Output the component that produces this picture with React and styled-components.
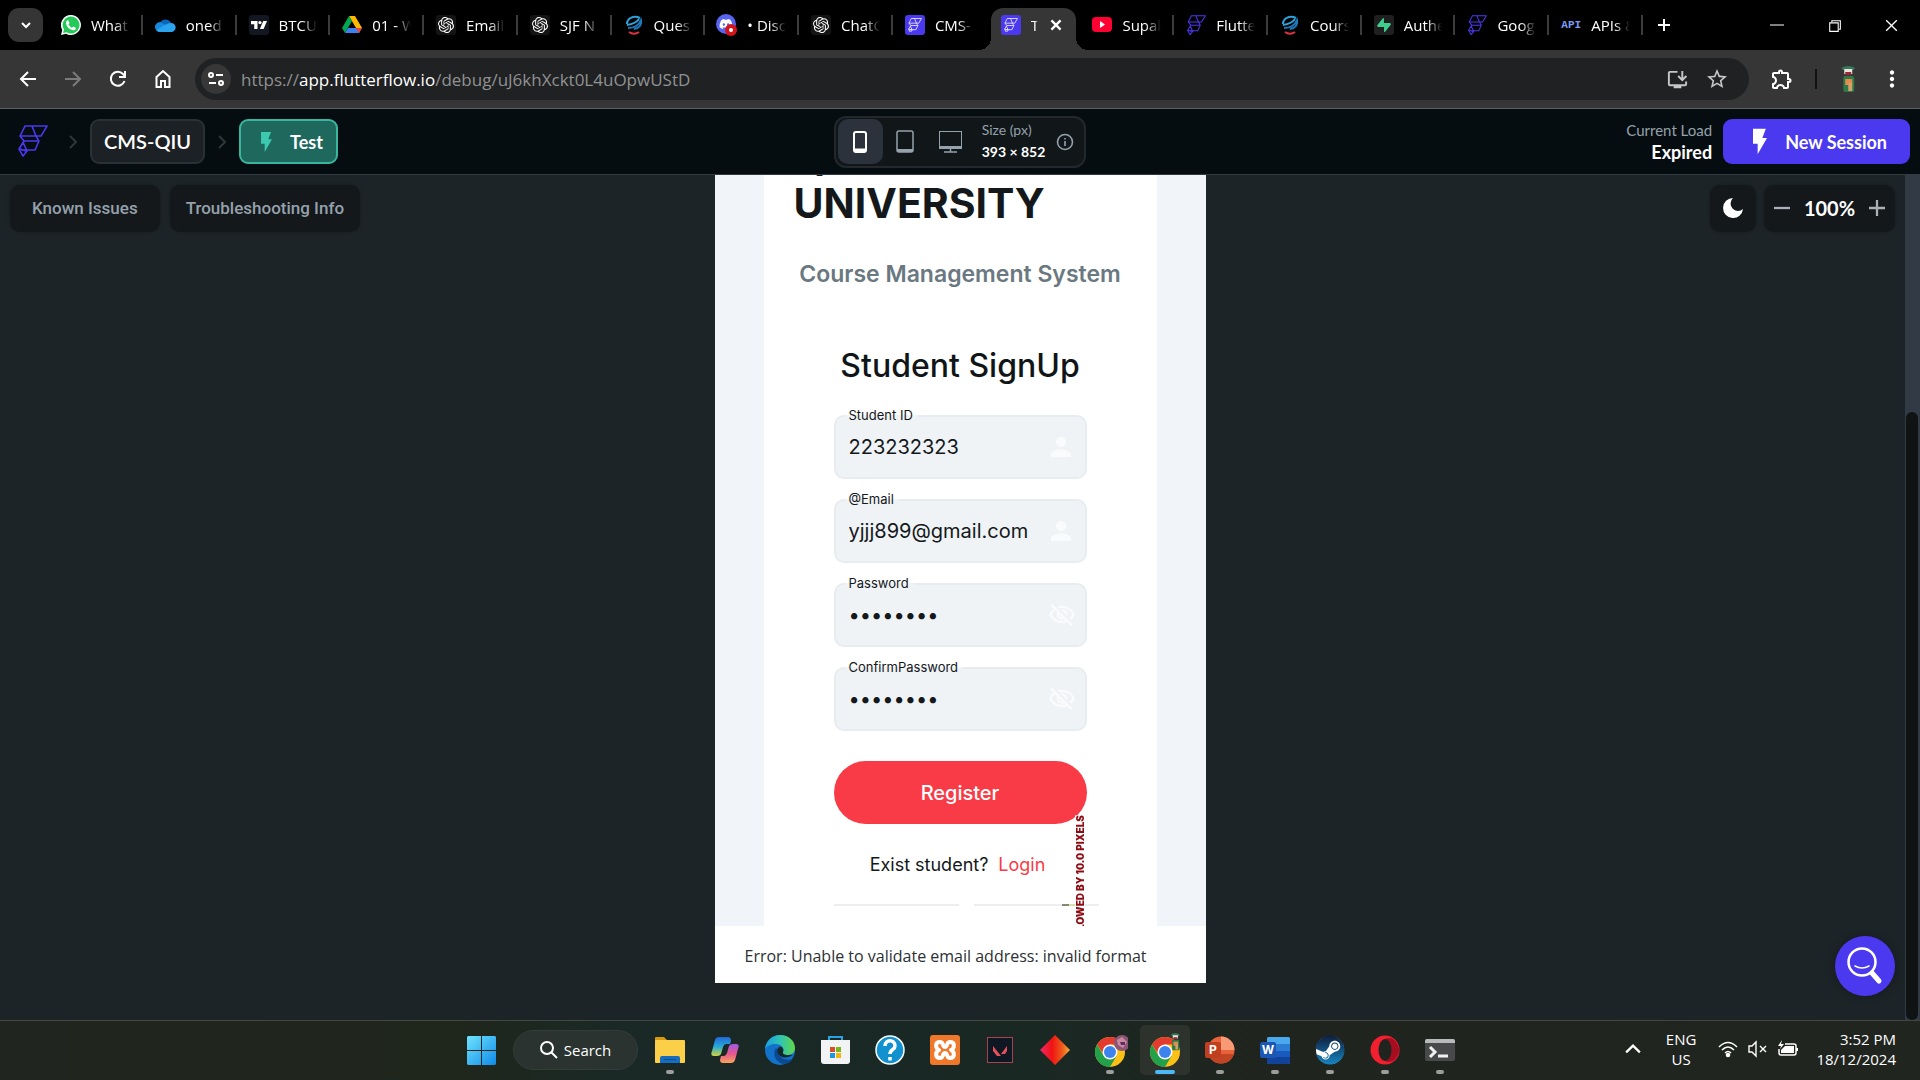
import React from "react";
import styled, { createGlobalStyle, css } from "styled-components";
import { FaDiscord, FaSteam } from "react-icons/fa";
import { SiOpenai, SiTradingview, SiSupabase } from "react-icons/si";
import { MdPerson, MdOutlineVisibilityOff, MdStarBorder, MdOutlineExtension, MdOutlineInstallDesktop, MdMoreVert } from "react-icons/md";
import { VscChromeRestore, VscChromeClose } from "react-icons/vsc";

const ui = '"Open Sans", "Noto Sans", sans-serif';
const brand = 'Lato, "Open Sans", sans-serif';
const inter = 'Inter, "Liberation Sans", sans-serif';

const GlobalStyle = createGlobalStyle`
  * {
    box-sizing: border-box;
  }

  body {
    margin: 0;
    background: #1d2428;
    font-family: ${ui};
  }

  button, input {
    font-family: inherit;
    border: 0;
    padding: 0;
    margin: 0;
    background: none;
    color: inherit;
    outline: none;
  }

  svg {
    display: block;
    flex: none;
  }
`;

const Screen = styled.div`
  display: flex;
  flex-direction: column;
  height: 100vh;
  overflow: hidden;
`;

/* Browser tabs */

const TabStrip = styled.div`
  display: flex;
  align-items: stretch;
  height: 50px;
  flex: none;
  background: #000;
  color: #fff;
`;

const TabSearch = styled.button`
  display: flex;
  align-items: center;
  justify-content: center;
  width: 35px;
  height: 34px;
  margin: 8px 6px 8px 8px;
  border-radius: 11px;
  background: #353535;
`;

const Tabs = styled.nav`
  display: grid;
  grid-auto-flow: column;
  grid-auto-columns: minmax(0, 1fr);
  flex: 1;
  min-width: 0;
`;

const Tab = styled.a`
  position: relative;
  display: flex;
  align-items: center;
  min-width: 0;
  gap: 10px;
  padding: 0 13px 0 12px;
  color: #fff;
  font-size: 15px;
  text-decoration: none;

  ${({ $divider }) => $divider && css`
    &::after {
      content: "";
      position: absolute;
      right: 0;
      top: 15px;
      width: 2px;
      height: 20px;
      background: #3c3c3c;
    }
  `}

  ${({ $active }) => $active && css`
    margin: 8px 4px 0 4px;
    padding: 0 12px 8px 10px;
    border-radius: 12px 12px 0 0;
    background: #373637;

    &::before,
    &::after {
      content: "";
      position: absolute;
      bottom: 0;
      width: 12px;
      height: 12px;
    }

    &::before {
      left: -12px;
      background: radial-gradient(circle at 0 0, transparent 12px, #373637 12px);
    }

    &::after {
      right: -12px;
      background: radial-gradient(circle at 100% 0, transparent 12px, #373637 12px);
    }
  `}
`;

const TabTitle = styled.span`
  flex: 1;
  min-width: 0;
  overflow: hidden;
  white-space: nowrap;
  mask-image: linear-gradient(90deg, #000 60%, transparent 100%);
`;

const TileIcon = styled.span`
  display: flex;
  align-items: center;
  justify-content: center;
  flex: none;
  width: 20px;
  height: 20px;
  border-radius: 3px;
  background: ${({ $bg }) => $bg || "transparent"};
  color: ${({ $color }) => $color || "#fff"};
`;

const ApiMark = styled.span`
  font: bold 11px "Liberation Mono", monospace;
  color: #7a9bf5;
`;

const WindowControls = styled.div`
  display: flex;
  align-items: center;
  justify-content: space-between;
  width: 277px;
  padding: 0 19px 0 11px;
`;

const ControlGroup = styled.div`
  display: flex;
  gap: 37px;
`;

/* Browser toolbar */

const Toolbar = styled.div`
  display: flex;
  align-items: center;
  height: 59px;
  flex: none;
  padding: 0 15px 0 18px;
  border-bottom: 1px solid #5b6163;
  background: #373637;
  color: #fff;
`;

const NavButtons = styled.div`
  display: flex;
  gap: 25px;
  margin-right: 22px;
`;

const IconButton = styled.button`
  display: flex;
  align-items: center;
  justify-content: center;
  min-width: 20px;
  height: 20px;
  color: ${({ $color }) => $color || "#fff"};
`;

const AddressBar = styled.div`
  display: flex;
  align-items: center;
  flex: 1;
  height: 42px;
  padding: 0 20px 0 6px;
  border-radius: 21px;
  background: #202122;
`;

const SiteInfo = styled.button`
  display: flex;
  align-items: center;
  justify-content: center;
  width: 30px;
  height: 30px;
  border-radius: 50%;
  background: #373737;
`;

const Url = styled.div`
  flex: 1;
  margin-left: 10px;
  font-size: 17px;
  color: #909294;

  b {
    font-weight: 400;
    color: #fff;
  }
`;

const AddressActions = styled.div`
  display: flex;
  gap: 16px;
`;

const ToolbarEnd = styled.div`
  display: flex;
  align-items: center;
  gap: 21px;
  margin-left: 21px;
`;

const Divider = styled.span`
  width: 2px;
  height: 20px;
  background: #111;
`;

/* FlutterFlow header */

const Header = styled.header`
  display: grid;
  grid-template-columns: 1fr auto 1fr;
  align-items: center;
  height: 66px;
  flex: none;
  padding: 0 10px;
  border-bottom: 1px solid #323b40;
  background: #060d10;
  font-family: ${brand};
  color: #fff;
`;

const Crumbs = styled.div`
  display: flex;
  align-items: center;
  gap: 10px;
`;

const Home = styled.a`
  margin: 0 8px;
`;

const Project = styled.button`
  height: 45px;
  padding: 0 12px 2px;
  border: 2px solid #2a3135;
  border-radius: 9px;
  background: #1c2125;
  font-size: 20px;
  font-weight: 600;
`;

const Pill = styled.button`
  display: flex;
  align-items: center;
  height: 45px;
  gap: 18px;
  padding: 0 23px 0 30px;
  border-radius: 9px;
  background: #4b39ef;
  font-size: 18px;
  font-weight: 700;
`;

const TestPill = styled(Pill)`
  padding: 0 13px 0 20px;
  border: 2px solid #3bb69e;
  background: #1e685d;
`;

const Devices = styled.div`
  display: flex;
  align-items: center;
  height: 52px;
  padding: 0 10px 0 2px;
  border: 2px solid #22282c;
  border-radius: 12px;
  background: #111619;
`;

const Device = styled.button`
  display: flex;
  align-items: center;
  justify-content: center;
  width: 45px;
  height: 45px;
  border-radius: 10px;
  background: ${({ $active }) => ($active ? "#2b323b" : "none")};
  color: ${({ $active }) => ($active ? "#fff" : "#95a1ac")};
`;

const Meta = styled.div`
  display: flex;
  flex-direction: column;
  gap: 2px;
  padding-bottom: 2px;
  text-align: ${({ $align }) => $align || "left"};
  font-size: ${({ $small }) => ($small ? 14 : 15)}px;
  line-height: 20px;
  color: #95a1ac;

  strong {
    color: #fff;
    font-size: ${({ $small }) => ($small ? 14 : 18)}px;
  }
`;

const DeviceMeta = styled(Meta)`
  margin: 0 11px 0 9px;
`;

const Session = styled.div`
  display: flex;
  align-items: center;
  justify-content: flex-end;
  gap: 11px;
`;

/* Canvas */

const Canvas = styled.main`
  position: relative;
  display: flex;
  flex: 1;
  min-height: 0;
  justify-content: space-between;
  background: #1d2428;
`;

const Side = styled.div`
  display: flex;
  flex: 1 1 0;
  gap: ${({ $end }) => ($end ? 8 : 10)}px;
  justify-content: ${({ $end }) => ($end ? "flex-end" : "flex-start")};
  padding: 10px 25px 10px 10px;
`;

const Chip = styled.button`
  display: flex;
  align-items: center;
  justify-content: center;
  height: 47px;
  padding: 0 16px 2px;
  border-radius: 10px;
  background: #14181b;
  box-shadow: 0 0 3px rgba(0, 0, 0, 0.3);
  color: #95a1ac;
  font: 500 17px Roboto, sans-serif;
  white-space: nowrap;
`;

const WideChip = styled(Chip)`
  padding: 0 22px 2px;
`;

const SquareChip = styled(Chip)`
  width: 46px;
  padding: 0 0 2px;
`;

const Zoom = styled.div`
  display: flex;
  align-items: center;
  justify-content: space-between;
  width: 131px;
  height: 47px;
  padding: 0 8px 2px;
  border-radius: 10px;
  background: #14181b;
  box-shadow: 0 0 3px rgba(0, 0, 0, 0.3);
  color: #fff;
  font: 700 20px ${brand};
`;

/* Overlay scrollbar along the right edge of the canvas */
const Scrollbar = styled.div`
  position: absolute;
  top: 0;
  right: 0;
  bottom: 0;
  display: flex;
  flex-direction: column;
  justify-content: flex-end;
  width: 15px;
  padding: 0 2px 0 1px;
  background: #323b45;
`;

const Thumb = styled.div`
  height: 72%;
  border-radius: 6px;
  background: #101314;
`;

const HelpButton = styled.button`
  position: absolute;
  right: 25px;
  bottom: 24px;
  display: flex;
  align-items: center;
  justify-content: center;
  width: 60px;
  height: 60px;
  border-radius: 50%;
  background: #4b39ef;
  box-shadow: 0 0 8px rgba(0, 0, 0, 0.35);
`;

const Phone = styled.div`
  display: flex;
  flex-direction: column;
  width: 491px;
  margin-bottom: 37px;
  font-family: ${inter};
  background: #f1f4f8;
`;

const Page = styled.div`
  display: flex;
  flex: 1;
  flex-direction: column;
  align-items: center;
  justify-content: flex-end;
  min-height: 0;
  width: 393px;
  margin: 0 auto;
  overflow: hidden;
  background: #fff;
`;

const School = styled.h1`
  align-self: stretch;
  margin: 0 30px;
  font-size: 41px;
  font-weight: 700;
  line-height: 44px;
  color: #14181b;
`;

const Course = styled.h2`
  margin: 34px 0 0;
  font-size: 23px;
  font-weight: 600;
  line-height: 30px;
  color: #6a7881;
`;

const SignUp = styled.h3`
  margin: 57px 0 0;
  font-size: 32px;
  font-weight: 500;
  line-height: 40px;
  color: #101518;
`;

const Form = styled.form`
  position: relative;
  display: flex;
  flex-direction: column;
  gap: 20px;
  width: 253px;
  margin-top: 29px;
`;

const Field = styled.div`
  position: relative;
  display: flex;
  align-items: center;
  height: 64px;
  padding: 0 9px 0 13px;
  border: 2px solid #e8ecf0;
  border-radius: 10px;
  background: #f0f3f6;
  color: #14181b;

  label {
    position: absolute;
    left: 9px;
    top: -10px;
    padding: 0 5px 0 4px;
    background: linear-gradient(transparent 50%, #f0f3f6 50%);
    font-size: 13px;
    line-height: 16px;
  }

  input {
    flex: 1;
    min-width: 0;
    font-size: 20px;
  }

  svg {
    color: #fafbfc;
  }
`;

const Register = styled.button`
  height: 63px;
  margin-top: 10px;
  border-radius: 32px;
  background: #f83b46;
  color: #fff;
  font-size: 20px;
  font-weight: 500;
`;

const Exist = styled.p`
  display: flex;
  justify-content: center;
  gap: 10px;
  margin: 28px 5px 0 0;
  font-size: 18px;
  line-height: 26px;
  color: #14181b;

  a {
    color: #f83b46;
    text-decoration: none;
  }
`;

const Rules = styled.div`
  display: flex;
  gap: 15px;
  width: 265px;
  margin: 26px 0 20px 12px;

  span {
    flex: 1;
    height: 2px;
    background: #eceef0;
  }

  span:last-child {
    background: linear-gradient(90deg, #eceef0 88px, #85877c 88px 95px, #dcdcae 95px 105px, #eceef0 105px);
  }
`;

const Overflow = styled.span`
  position: absolute;
  right: 2px;
  top: 400px;
  writing-mode: vertical-rl;
  transform: rotate(180deg);
  font-size: 10px;
  font-weight: 900;
  line-height: 10px;
  white-space: nowrap;
  background: rgba(255, 255, 255, 0.9);
  color: #8e0d14;
`;

const Snackbar = styled.div`
  height: 57px;
  flex: none;
  padding: 0 30px;
  background: #fff;
  color: #2c3033;
  font: 16px/60px ${ui};
  white-space: nowrap;
`;

/* Taskbar */

const Taskbar = styled.footer`
  display: grid;
  grid-template-columns: 1fr auto 1fr;
  height: 60px;
  flex: none;
  border-top: 1px solid #42473f;
  background: linear-gradient(90deg, #21251f 0%, #1f261c 24%, #1a2926 32%, #1a2824 54%, #20241e 66%, #21251f 100%);
  color: #fff;
`;

const Apps = styled.div`
  grid-column: 2;
  display: flex;
  align-items: center;
  padding-bottom: 1px;
`;

const TaskButton = styled.button`
  position: relative;
  display: flex;
  align-items: center;
  justify-content: center;
  width: 50px;
  height: 50px;
  margin: 0 2px 0 3px;
  border-radius: 5px;
  background: ${({ $active }) => ($active ? "#2d322d" : "none")};

  &::after {
    content: "";
    position: absolute;
    bottom: 1px;
    width: ${({ $active }) => ($active ? 20 : 8)}px;
    height: 4px;
    border-radius: 2px;
    background: ${({ $active, $running }) => ($active ? "#4cb8f5" : $running ? "#9b9e9a" : "none")};
  }
`;

const Search = styled.button`
  display: flex;
  align-items: center;
  justify-content: center;
  gap: 6px;
  width: 125px;
  height: 40px;
  margin: 0 4px 0 5px;
  border: 1px solid #333c38;
  border-radius: 20px;
  background: #2a332f;
  font-size: 15px;
`;

const Tray = styled.div`
  display: flex;
  align-items: center;
  justify-content: flex-end;
  padding: 0 24px 3px 0;
  font-size: 15px;
  line-height: 20px;
`;

const Language = styled.div`
  margin: 0 22px 0 25px;
  text-align: center;
`;

const Status = styled.div`
  display: flex;
  gap: 10px;
`;

const Clock = styled.div`
  margin-left: 18px;
  text-align: right;
`;

const Chevron = ({ d, size = 14, color = "#fff", weight = 2 }) => (
    <svg width={size} height={size} viewBox="0 0 14 14" fill="none" stroke={color} strokeWidth={weight}><path d={d} /></svg>
);

const FlutterFlow = ({ width, color }) => (
    <svg width={width} height={width * 1.07} viewBox="0 0 30 32" fill="none" stroke={color} strokeWidth="1.6" strokeLinejoin="round">
        <path d="M7 1H29L23 11H2Z M14 1L18 11 M2 11L6 16H21L18 11 M21 16L17 25H3 M6 16L1 24L5 31L9 26L5 17 M2 24L8 26" />
    </svg>
);

const Bolt = ({ width, height, color }) => (
    <svg width={width} height={height} viewBox="0 0 12 22" fill={color}><path d="M0 0H11L8 8H12L4 22V13H0Z" /></svg>
);

const Drive = () => (
    <svg width="20" height="20" viewBox="0 0 20 20">
        <path fill="#ffba00" d="M7 1H13L20 13H14Z" />
        <path fill="#00a651" d="M7 1L10 6L3 18L0 13Z" />
        <path fill="#3e82f1" d="M6 13H20L17 18H3Z" />
        <path fill="#ea4335" d="M14 13H20L17 18Z" />
    </svg>
);

const Globe = () => (
    <svg width="18" height="20" viewBox="0 0 18 20" fill="none" strokeWidth="2">
        <path stroke="#2aa3da" d="M2 9C2 3 9 0 15 3M2 10C8 9 12 7 14 4" />
        <path stroke="#1d78b8" d="M3 13C10 13 14 10 16 5C17 9 15 13 9 14" />
        <path stroke="#e0323c" d="M4 17C7 19 11 19 14 17" />
    </svg>
);

const OneDrive = () => (
    <svg width="21" height="14" viewBox="0 0 21 14">
        <path fill="#0a66bb" d="M5 5A6 6 0 0 1 16 5L10 10L2 9Z" />
        <path fill="#1689db" d="M5 4A5 5 0 0 0 1 12L13 8Z" />
        <path fill="#2ba4ef" d="M15 5A4.500 4.500 0 0 1 17 14H5A4 4 0 0 1 1 12L12 6Z" />
    </svg>
);

const DiscordRec = () => (
    <svg width="22" height="22" viewBox="0 0 22 22">
        <circle cx="10" cy="10" r="10" fill="#5865f2" />
        <FaDiscord x="3" y="3" size="14" color="#fff" />
        <circle cx="15" cy="16" r="6" fill="#d3141d" />
        <circle cx="15" cy="16" r="2" fill="#fff" />
    </svg>
);

const Whatsapp = () => (
    <svg width="20" height="20" viewBox="0 0 20 20">
        <path fill="#fff" d="M10 0A10 10 0 1 1 5 18.700L0 20L1.300 15A10 10 0 0 1 10 0Z" />
        <path fill="#25c95a" d="M10 1.500A8.500 8.500 0 1 1 5.500 17.200L2 18L3 14.600A8.500 8.500 0 0 1 10 1.500Z" />
        <path fill="#fff" d="M7 5L8.500 8L7.500 9.500Q9 12 11 12.700L12.500 11.500L15 13Q14.500 15.500 12 15.200Q6 14 5 8Q5 5.500 7 5Z" />
    </svg>
);

const Youtube = () => (
    <svg width="20" height="16" viewBox="0 0 20 16">
        <rect width="20" height="15" y="0" rx="4" fill="#ff0033" />
        <path fill="#fff" d="M8 4L13 7.500L8 11Z" />
    </svg>
);

const Avatar = ({ size = 30 }) => (
    <svg width={size * 0.55} height={size} viewBox="0 0 16 30">
        <path d="M1 4Q8 0 15 4L13 6H3Z" fill="#36795a" />
        <rect x="4" y="5" width="8" height="5" fill="#e9e4dc" />
        <rect x="5" y="8" width="6" height="3" fill="#9c2733" />
        <rect x="3" y="12" width="11" height="16" rx="2" fill="#2c7a49" />
        <rect x="5" y="15" width="7" height="6" fill="#e88a4c" />
        <rect x="8" y="19" width="4" height="8" fill="#d7a06b" />
    </svg>
);

const Chrome = ({ children }) => (
    <svg width="36" height="34" viewBox="0 0 36 34">
        <circle cx="18" cy="19" r="15" fill="#fbc116" />
        <path fill="#e33b2e" d="M5 11.500A15 15 0 0 1 31 11.500H18L12 22Z" />
        <path fill="#22a04a" d="M5 11.500A15 15 0 0 0 18 34L24.500 23L18 19L11.500 22.500Z" />
        <circle cx="18" cy="19" r="7.500" fill="#fff" />
        <circle cx="18" cy="19" r="6" fill="#3c83ee" />
        {children}
    </svg>
);

const Windows = () => (
    <svg width="29" height="29" viewBox="0 0 29 29">
        <defs>
            <linearGradient id="win" x1="0" y1="0" x2="1" y2="1"><stop stopColor="#6fe4fd" /><stop offset="1" stopColor="#0f8ae8" /></linearGradient>
        </defs>
        <path fill="url(#win)" d="M1 0H14V14H0V1ZM15 0H28L29 1V14H15ZM0 15H14V29H1L0 28ZM15 15H29V28L28 29H15Z" />
    </svg>
);

const Explorer = () => (
    <svg width="30" height="28" viewBox="0 0 30 28">
        <path fill="#d9990f" d="M0 2Q0 1 1 1H9L12 4H18V10H0Z" />
        <rect y="4" width="30" height="23" rx="1" fill="#fbcf47" />
        <path fill="#176cbd" d="M5 27V22Q5 20 7 20H23Q25 20 25 22V27Z" />
        <rect x="9" y="23" width="12" height="1" fill="#0d4f91" />
    </svg>
);

const Copilot = () => (
    <svg width="28" height="28" viewBox="0 0 28 28">
        <defs>
            <linearGradient id="copA" x1="0" y1="0" x2="0" y2="1"><stop stopColor="#2367d8" /><stop offset=".5" stopColor="#25a9d8" /><stop offset="1" stopColor="#d0d53e" /></linearGradient>
            <linearGradient id="copB" x1="0" y1="0" x2="0" y2="1"><stop stopColor="#9b5be6" /><stop offset=".5" stopColor="#e65590" /><stop offset="1" stopColor="#f7a45c" /></linearGradient>
        </defs>
        <path fill="url(#copA)" d="M8 1H17Q20 1 20 5L19 8H15Q13 8 12 11L10 18Q9 20 6 20H3Q-1 20 1 15L4 4Q5 1 8 1Z" />
        <path fill="url(#copB)" d="M20 27H12Q9 27 9 24L10 20H13Q15 20 16 17L18 10Q19 8 22 8H25Q29 8 27 13L24 24Q23 27 20 27Z" />
    </svg>
);

const Edge = () => (
    <svg width="30" height="30" viewBox="0 0 30 30">
        <defs>
            <linearGradient id="edge" x1="0" x2="1"><stop stopColor="#1b9de2" /><stop offset=".5" stopColor="#2fc3b5" /><stop offset="1" stopColor="#62d748" /></linearGradient>
        </defs>
        <circle cx="15" cy="15" r="15" fill="#1272c9" />
        <path fill="url(#edge)" d="M0 14C1 5 8 0 15 0C24 0 30 6 30 13C30 18 26 20 22 20C19 20 17 19 18 17C20 13 16 9 11 9C6 9 2 11 0 14Z" />
        <path fill="#0b4a93" d="M11 13C7 18 10 27 18 29C22 29 26 27 28 24C22 26 13 24 13 15Z" />
        <path fill="#15282a" d="M14 12C11 14 12 20 17 22C20 23 25 22 28 20C25 20 17 21 18 17C19 15 18 11 14 12Z" />
    </svg>
);

const Store = () => (
    <svg width="29" height="30" viewBox="0 0 29 30">
        <path fill="none" stroke="#27a3e3" strokeWidth="2" d="M8 7V2H21V7" />
        <path fill="#f2f3f4" d="M0 5H29V26Q29 29 26 29H3Q0 29 0 26Z" />
        <path fill="#d8502a" d="M9 12H14V17H9Z" />
        <path fill="#79b51c" d="M15 12H20V17H15Z" />
        <path fill="#1e96de" d="M9 18H14V23H9Z" />
        <path fill="#f5b310" d="M15 18H20V23H15Z" />
    </svg>
);

const Help = () => (
    <svg width="30" height="30" viewBox="0 0 30 30" fill="none" stroke="#fff">
        <circle cx="15" cy="15" r="14" fill="#1191d0" strokeWidth="1.500" />
        <path strokeWidth="3.500" d="M10 11C10 4 20 4 20 11C20 15 15 14 15 19M15 22V25.500" />
    </svg>
);

const Xampp = () => (
    <svg width="30" height="30" viewBox="0 0 30 30">
        <rect width="30" height="30" rx="3" fill="#f0782a" />
        <path fill="none" stroke="#fff" strokeWidth="4" strokeLinejoin="round" d="M10 7C5 7 5 13 9 15C5 17 5 23 10 23C14 23 12 18 15 18C18 18 16 23 20 23C25 23 25 17 21 15C25 13 25 7 20 7C16 7 18 12 15 12C12 12 14 7 10 7Z" />
    </svg>
);

const Valorant = () => (
    <svg width="26" height="28" viewBox="0 0 26 28">
        <rect x=".5" y="1.500" width="25" height="25" fill="#0f1722" stroke="#a5444f" />
        <path fill="#e8505b" d="M6 10L14 20H10L6 15ZM20 10V15L18 18H14Z" />
    </svg>
);

const Diamond = () => (
    <svg width="30" height="30" viewBox="0 0 30 30">
        <defs>
            <linearGradient id="dia"><stop stopColor="#f1286b" /><stop offset=".4" stopColor="#f01313" /><stop offset=".75" stopColor="#ee5c1c" /><stop offset="1" stopColor="#f6b238" /></linearGradient>
        </defs>
        <path fill="url(#dia)" d="M15 0L30 15L15 30L0 15Z" />
    </svg>
);

const OfficeLetter = styled.text`
  font: bold 12px ${inter};
  fill: #fff;
  text-anchor: middle;
`;

const PowerPoint = () => (
    <svg width="30" height="29" viewBox="0 0 30 29">
        <circle cx="16" cy="14" r="13.500" fill="#e8633a" />
        <path fill="#f79a75" d="M16 0.500A13.500 13.500 0 0 1 29.500 14H16Z" />
        <path fill="#c14524" d="M3 18H29A13.500 13.500 0 0 1 4 20Z" />
        <rect y="6" width="16" height="16" rx="2" fill="#c03f1f" />
        <OfficeLetter x="8" y="18">P</OfficeLetter>
    </svg>
);

const Word = () => (
    <svg width="30" height="29" viewBox="0 0 30 29">
        <rect x="7" y="1" width="23" height="27" rx="2" fill="#2b7cd3" />
        <path fill="#4aa8ec" d="M7 3Q7 1 9 1H28Q30 1 30 3V8H7Z" />
        <path fill="#185abd" d="M7 15H30V21H7Z" />
        <path fill="#12439a" d="M7 21H30V26Q30 28 28 28H9Q7 28 7 26Z" />
        <rect y="6" width="16" height="16" rx="2" fill="#1d57b4" />
        <OfficeLetter x="8" y="18">W</OfficeLetter>
    </svg>
);

const Steam = () => (
    <svg width="30" height="30" viewBox="0 0 30 30">
        <defs>
            <linearGradient id="steam" x1="0" y1="0" x2="0" y2="1"><stop stopColor="#101d3d" /><stop offset="1" stopColor="#1685c0" /></linearGradient>
        </defs>
        <circle cx="15" cy="15" r="14" fill="#fff" />
        <FaSteam x="0" y="0" size="30" fill="url(#steam)" />
    </svg>
);

const Opera = () => (
    <svg width="30" height="30" viewBox="0 0 30 30">
        <circle cx="15" cy="15" r="14.500" fill="#f2202f" />
        <path fill="#a70d20" d="M15 4A14 14 0 0 1 15 26C24 30 29 20 29 15C29 10 24 0 15 4Z" />
        <ellipse cx="15" cy="15" rx="6.500" ry="11" fill="#1f241e" />
    </svg>
);

const Terminal = () => (
    <svg width="30" height="24" viewBox="0 0 30 24">
        <rect y="1" width="30" height="22" rx="2" fill="#48494a" />
        <path fill="#b9babb" d="M0 5V3Q0 1 2 1H28Q30 1 30 3V5Z" />
        <path fill="none" stroke="#f1f1f1" strokeWidth="3" d="M5 9L10 14L5 19M13 18H23" />
    </svg>
);

const tabs = [
    { title: "What", icon: <Whatsapp /> },
    { title: "oned", icon: <OneDrive /> },
    { title: "BTCU", icon: <TileIcon $bg="#131722"><SiTradingview size={16} /></TileIcon> },
    { title: "01 - W", icon: <Drive /> },
    { title: "Email", icon: <TileIcon $bg="#141414"><SiOpenai size={16} /></TileIcon> },
    { title: "SJF N", icon: <TileIcon $bg="#141414"><SiOpenai size={16} /></TileIcon> },
    { title: "Ques", icon: <TileIcon><Globe /></TileIcon> },
    { title: "• Disc", icon: <TileIcon><DiscordRec /></TileIcon> },
    { title: "ChatG", icon: <TileIcon $bg="#141414"><SiOpenai size={16} /></TileIcon> },
    { title: "CMS-", icon: <TileIcon $bg="#4b39ef"><FlutterFlow width={14} color="#fff" /></TileIcon> },
    { title: "T", active: true, icon: <TileIcon $bg="#4b39ef"><FlutterFlow width={14} color="#fff" /></TileIcon> },
    { title: "Supab", icon: <Youtube /> },
    { title: "Flutte", icon: <TileIcon><FlutterFlow width={19} color="#4b39ef" /></TileIcon> },
    { title: "Cours", icon: <TileIcon><Globe /></TileIcon> },
    { title: "Authe", icon: <TileIcon $bg="#1f1f1f"><SiSupabase size={14} color="#3ecf8e" /></TileIcon> },
    { title: "Goog", icon: <TileIcon><FlutterFlow width={19} color="#4b39ef" /></TileIcon> },
    { title: "APIs &", icon: <TileIcon><ApiMark>API</ApiMark></TileIcon> },
];

const fields = [
    { id: "student", label: "Student ID", type: "text", value: "223232323" },
    { id: "email", label: "@Email", type: "text", value: "yjjj899@gmail.com" },
    { id: "password", label: "Password", type: "password", value: "12345678" },
    { id: "confirm", label: "ConfirmPassword", type: "password", value: "12345678" },
];

const apps = [
    { name: "File Explorer", icon: <Explorer />, running: true },
    { name: "Copilot", icon: <Copilot /> },
    { name: "Edge", icon: <Edge /> },
    { name: "Store", icon: <Store /> },
    { name: "Help", icon: <Help /> },
    { name: "XAMPP", icon: <Xampp /> },
    { name: "Valorant", icon: <Valorant /> },
    { name: "Diamond", icon: <Diamond /> },
    {
        name: "Chrome profile",
        running: true,
        icon: <Chrome><circle cx="30" cy="10" r="8" fill="#8d5575" /><path d="M25 7L30 4L35 9L31 15L26 12Z" fill="#c98aa0" /><path d="M28 9H33V12H29Z" fill="#5c2f62" /></Chrome>
    },
    { name: "Chrome", icon: <Chrome><g transform="translate(23 -1) scale(.65)"><Avatar /></g></Chrome>, active: true },
    { name: "PowerPoint", icon: <PowerPoint />, running: true },
    { name: "Word", icon: <Word />, running: true },
    { name: "Steam", icon: <Steam />, running: true },
    { name: "Opera", icon: <Opera />, running: true },
    { name: "Terminal", icon: <Terminal />, running: true },
];

const BrowserChrome = () => (
    <>
        <TabStrip>
            <TabSearch aria-label="Search tabs"><Chevron d="M3 5L7 9L11 5" /></TabSearch>
            <Tabs>
                {
                    tabs.map((tab, i) => (
                        <Tab key={i} href="#" $active={tab.active} $divider={!tab.active && !tabs[i + 1]?.active}>
                            {tab.icon}
                            <TabTitle>{tab.title}</TabTitle>
                            {tab.active && <Chevron size={16} d="M3 3L11 11M11 3L3 11" />}
                        </Tab>
                    ))
                }
            </Tabs>
            <WindowControls>
                <IconButton aria-label="New tab"><Chevron d="M7 1V13M1 7H13" /></IconButton>
                <ControlGroup>
                    <IconButton aria-label="Minimize"><Chevron d="M0 7H14" weight={1} /></IconButton>
                    <IconButton aria-label="Restore"><VscChromeRestore size={17} /></IconButton>
                    <IconButton aria-label="Close"><VscChromeClose size={17} /></IconButton>
                </ControlGroup>
            </WindowControls>
        </TabStrip>
        <Toolbar>
            <NavButtons>
                <IconButton aria-label="Back">
                    <svg width="20" height="20" viewBox="0 0 20 20" fill="none" stroke="currentColor" strokeWidth="2"><path d="M18 10H3M10 3L3 10L10 17" /></svg>
                </IconButton>
                <IconButton aria-label="Forward" $color="#7b7b7b">
                    <svg width="20" height="20" viewBox="0 0 20 20" fill="none" stroke="currentColor" strokeWidth="2"><path d="M2 10H17M10 3L17 10L10 17" /></svg>
                </IconButton>
                <IconButton aria-label="Reload">
                    <svg width="20" height="20" viewBox="0 0 20 20" fill="none" stroke="currentColor" strokeWidth="2"><path d="M16.500 12A7 7 0 1 1 15 5L17 7M17 2V8H11" /></svg>
                </IconButton>
                <IconButton aria-label="Home">
                    <svg width="20" height="20" viewBox="0 0 20 20" fill="none" stroke="currentColor" strokeWidth="2"><path d="M3.500 8L10 2L16.500 8V18H12V12H8V18H3.500Z" /></svg>
                </IconButton>
            </NavButtons>
            <AddressBar>
                <SiteInfo aria-label="Site information">
                    <svg width="18" height="16" viewBox="0 0 18 16" fill="none" stroke="#fff" strokeWidth="2"><circle cx="4" cy="4" r="2" /><path d="M9 4H16M2 12H9" /><circle cx="14" cy="12" r="2" /></svg>
                </SiteInfo>
                <Url>https://<b>app.flutterflow.io</b>/debug/uJ6khXckt0L4uOpwUStD</Url>
                <AddressActions>
                    <IconButton aria-label="Install" $color="#c5c7c8"><MdOutlineInstallDesktop size={23} /></IconButton>
                    <IconButton aria-label="Bookmark" $color="#c5c7c8"><MdStarBorder size={24} /></IconButton>
                </AddressActions>
            </AddressBar>
            <ToolbarEnd>
                <IconButton aria-label="Extensions"><MdOutlineExtension size={24} /></IconButton>
                <Divider />
                <IconButton aria-label="Profile"><Avatar /></IconButton>
                <IconButton aria-label="Menu"><MdMoreVert size={26} /></IconButton>
            </ToolbarEnd>
        </Toolbar>
    </>
);

const AppHeader = () => (
    <Header>
        <Crumbs>
            <Home href="#" aria-label="Home"><FlutterFlow width={30} color="#4b39ef" /></Home>
            <Chevron color="#2f373c" d="M4 1L10 7L4 13" />
            <Project>CMS-QIU</Project>
            <Chevron color="#2f373c" d="M4 1L10 7L4 13" />
            <TestPill><Bolt width={11} height={20} color="#3dc9b0" />Test</TestPill>
        </Crumbs>
        <Devices>
            <Device $active aria-label="Phone">
                <svg width="14" height="22" viewBox="0 0 14 22" fill="none" stroke="currentColor" strokeWidth="2"><rect x="1" y="1" width="12" height="20" rx="2" /><path d="M1 19H13" strokeWidth="3" /></svg>
            </Device>
            <Device aria-label="Tablet">
                <svg width="18" height="23" viewBox="0 0 18 23" fill="none" stroke="currentColor" strokeWidth="1.500"><rect x="1" y="1" width="16" height="21" rx="2" /><path d="M1 20.500H17" strokeWidth="3" /></svg>
            </Device>
            <Device aria-label="Desktop">
                <svg width="23" height="22" viewBox="0 0 23 22" fill="none" stroke="currentColor"><rect x=".5" y=".5" width="22" height="17" /><path d="M0 16.500H23" strokeWidth="3" /><path d="M11.500 17V21M5 21H18" strokeWidth="1.500" /></svg>
            </Device>
            <DeviceMeta $small>Size (px)<strong>393 × 852</strong></DeviceMeta>
            <svg width="18" height="18" viewBox="0 0 18 18" fill="none" stroke="#95a1ac" strokeWidth="1.600"><circle cx="9" cy="9" r="7.500" /><path d="M9 8V13M9 5V6.500" /></svg>
        </Devices>
        <Session>
            <Meta $align="right">Current Load<strong>Expired</strong></Meta>
            <Pill><Bolt width={14} height={27} color="#fff" />New Session</Pill>
        </Session>
    </Header>
);

const SignUpForm = () => (
    <Form>
        {
            fields.map(({ id, label, type, value }) => (
                <Field key={id}>
                    <label htmlFor={id}>{label}</label>
                    <input id={id} type={type} defaultValue={value} />
                    {type === "password" ? <MdOutlineVisibilityOff size={28} /> : <MdPerson size={30} />}
                </Field>
            ))
        }
        <Register type="button">Register</Register>
        <Overflow>RIGHT OVERFLOWED BY 10.0 PIXELS</Overflow>
    </Form>
);

const App = () => (
    <Screen>
        <GlobalStyle />
        <BrowserChrome />
        <AppHeader />
        <Canvas>
            <Side>
                <WideChip>Known Issues</WideChip>
                <Chip>Troubleshooting Info</Chip>
            </Side>
            <Phone>
                <Page>
                    <School>Q<br />UNIVERSITY</School>
                    <Course>Course Management System</Course>
                    <SignUp>Student SignUp</SignUp>
                    <SignUpForm />
                    <Exist>Exist student? <a href="#">Login</a></Exist>
                    <Rules><span /><span /></Rules>
                </Page>
                <Snackbar>Error: Unable to validate email address: invalid format</Snackbar>
            </Phone>
            <Side $end>
                <SquareChip aria-label="Dark mode">
                    <svg width="20" height="20" viewBox="0 0 20 20" fill="#fff"><path d="M10 0A10 10 0 1 0 20 11A6.500 6.500 0 0 1 10 0Z" /></svg>
                </SquareChip>
                <Zoom>
                    <IconButton aria-label="Zoom out"><Chevron size={16} color="#aab2b8" d="M0 7H14" /></IconButton>
                    100%
                    <IconButton aria-label="Zoom in"><Chevron size={16} color="#aab2b8" d="M0 7H14M7 0V14" /></IconButton>
                </Zoom>
            </Side>
            <Scrollbar><Thumb /></Scrollbar>
            <HelpButton aria-label="Help">
                <svg width="36" height="38" viewBox="0 0 36 38" fill="none" stroke="#fff" strokeLinecap="round">
                    <circle cx="15" cy="15" r="13.500" strokeWidth="2.500" />
                    <path d="M8 19Q15 23 22 19" strokeWidth="1.600" />
                    <path d="M25 26L32 34" strokeWidth="5" />
                </svg>
            </HelpButton>
        </Canvas>
        <Taskbar>
            <Apps>
                <TaskButton aria-label="Start"><Windows /></TaskButton>
                <Search>
                    <svg width="18" height="18" viewBox="0 0 18 18" fill="none" stroke="#fff" strokeWidth="2"><circle cx="7" cy="7" r="6" /><path d="M11 11L17 17" /></svg>
                    Search
                </Search>
                {
                    apps.map(({ name, icon, running, active }) => (
                        <TaskButton key={name} aria-label={name} $running={running} $active={active}>{icon}</TaskButton>
                    ))
                }
            </Apps>
            <Tray>
                <Chevron size={16} d="M1 10L7 4L13 10" />
                <Language>ENG<br />US</Language>
                <Status>
                    <svg width="20" height="18" viewBox="0 0 20 18" fill="none" stroke="#fff" strokeWidth="1.600"><path d="M1 7Q10 -2 19 7M4 10Q10 4 16 10M7 13Q10 10 13 13" /><circle cx="10" cy="15" r="1.500" fill="#fff" /></svg>
                    <svg width="20" height="18" viewBox="0 0 20 18" fill="none" stroke="#fff" strokeWidth="1.400"><path d="M1 6H4L8 2V16L4 12H1ZM12 6L18 12M18 6L12 12" /></svg>
                    <svg width="20" height="18" viewBox="0 0 20 18" fill="none" stroke="#fff" strokeWidth="1.500"><path d="M7 4H16Q18 4 18 6V13Q18 15 16 15H3Q1 15 1 13V9" /><path d="M19 8V11" strokeWidth="2" /><path d="M7 6H16V13H3V10Z" fill="#fff" stroke="none" /><path d="M4 0L0 6H3L2 9L6 4H3Z" fill="#fff" stroke="none" /></svg>
                </Status>
                <Clock>3:52 PM<br />18/12/2024</Clock>
            </Tray>
        </Taskbar>
    </Screen>
);

export default App;
